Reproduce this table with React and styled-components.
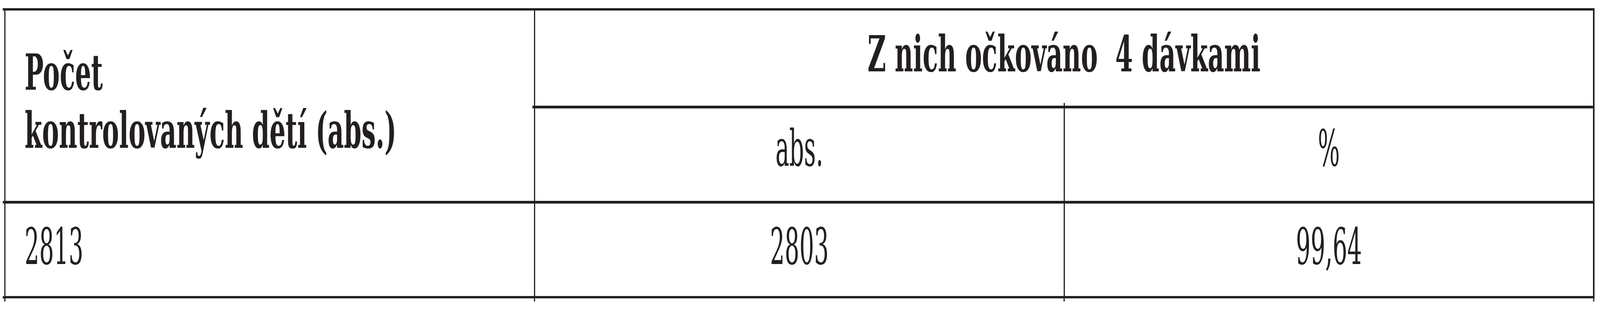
import React, { useEffect, useState } from "react";
import styled, { createGlobalStyle } from "styled-components";

/* The reference is drawn on a 7803px-wide page. Horizontal measures are
   expressed as a share of the viewport width so the table keeps its
   proportions on whatever window width the page gets. */
const REF_W = 7803;
const X = (px) => `${((px * 100) / REF_W).toFixed(5)}vw`;

const INK = "#231f20";
const RULE = 6.6; // rule thickness (reference px)
const TABLE_W = 7755.3;
const COL_W = (TABLE_W - 4 * RULE) / 3;

const Global = createGlobalStyle`
  html, body { margin: 0; padding: 0; background: #ffffff; overflow: hidden; }
`;

const Page = styled.div`
  box-sizing: border-box;
  width: 100vw;
  height: 800px;
  padding: 20.5px 0 0 ${X(20.7)};
  background: #ffffff;
`;

/* rules are the ink showing through the gaps of the grid */
const Table = styled.div`
  position: relative;
  box-sizing: border-box;
  width: ${X(TABLE_W)};
  display: grid;
  grid-template-columns: repeat(3, minmax(0, 1fr));
  grid-template-rows: 244px 237.3px 237.3px;
  gap: ${RULE}px ${X(RULE)};
  padding: ${RULE}px ${X(RULE)};
  background: ${INK};

  /* overhang of the horizontal rules past the left border */
  &::before {
    content: "";
    position: absolute;
    left: ${X(-7)};
    top: 0;
    width: ${X(7)};
    height: ${RULE}px;
    background: ${INK};
    box-shadow: 0 494.5px 0 ${INK}, 0 738.4px 0 ${INK};
  }

  /* overhang of the vertical rules below the bottom rule */
  &::after {
    content: "";
    position: absolute;
    left: 0;
    top: 100%;
    width: ${X(RULE)};
    height: 7.5px;
    background: ${INK};
    box-shadow: ${X(RULE + COL_W)} 0 0 ${INK}, ${X(2 * (RULE + COL_W))} 0 0 ${INK},
      ${X(3 * (RULE + COL_W))} 0 0 ${INK};
  }
`;

const Cell = styled.div`
  background: #ffffff;
  color: ${INK};
  box-sizing: border-box;
  min-width: 0;
  grid-column: ${(p) => p.$col};
  grid-row: ${(p) => p.$row};
  text-align: ${(p) => (p.$left ? "left" : "center")};
  padding-top: ${(p) => p.$top}px;
  padding-left: ${(p) => (p.$left ? X(p.$left) : 0)};
`;

/* the spanning group heading; its pseudo-elements draw the little stubs
   where the sub-heading rules start */
const GroupCell = styled(Cell)`
  position: relative;

  &::before {
    content: "";
    position: absolute;
    left: ${X(COL_W)};
    bottom: 0;
    width: ${X(RULE)};
    height: 7.1px;
    background: ${INK};
  }

  &::after {
    content: "";
    position: absolute;
    left: ${X(-RULE - 7.5)};
    top: 100%;
    width: ${X(7.5)};
    height: ${RULE}px;
    background: ${INK};
  }
`;

const Text = styled.span`
  display: inline-block;
  white-space: pre;
  font-family: "DejaVu Serif", "Liberation Serif", serif;
  font-weight: ${(p) => (p.$bold ? 700 : 400)};
  font-size: ${(p) => (p.$bold ? 128 : 130)}px;
  line-height: 149px;
  color: ${INK};
  transform-origin: ${(p) => (p.$origin === "left" ? "left top" : "center top")};
`;

/* width factors that bring DejaVu Serif to the set widths of the original face */
const BOLD_FIT = 0.961;
const REG_FIT = 0.865;

function useSquish() {
  const [k, setK] = useState(
    typeof window !== "undefined" ? window.innerWidth / REF_W : 1
  );
  useEffect(() => {
    const on = () => setK(window.innerWidth / REF_W);
    window.addEventListener("resize", on);
    return () => window.removeEventListener("resize", on);
  }, []);
  return k;
}

export default function App() {
  const k = useSquish();
  const t = (bold) => ({
    transform: `scaleX(${(k * (bold ? BOLD_FIT : REG_FIT)).toFixed(4)})`,
  });

  return (
    <>
      <Global />
      <Page>
        <Table>
          <Cell $row="1 / span 2" $col="1" $left={93} $top={83.7}>
            <Text $bold $origin="left" style={t(true)}>
              {"Počet\nkontrolovaných dětí (abs.)"}
            </Text>
          </Cell>
          <GroupCell $row="1" $col="2 / span 2" $top={36.8}>
            <Text $bold style={t(true)}>{"Z nich očkováno  4 dávkami"}</Text>
          </GroupCell>
          <Cell $row="2" $col="2" $top={28.8}>
            <Text style={t(false)}>abs.</Text>
          </Cell>
          <Cell $row="2" $col="3" $top={28.8}>
            <Text style={t(false)}>%</Text>
          </Cell>
          <Cell $row="3" $col="1" $left={92} $top={36.5}>
            <Text $origin="left" style={t(false)}>2813</Text>
          </Cell>
          <Cell $row="3" $col="2" $top={36.5}>
            <Text style={t(false)}>2803</Text>
          </Cell>
          <Cell $row="3" $col="3" $top={36.5}>
            <Text style={t(false)}>99,64</Text>
          </Cell>
        </Table>
      </Page>
    </>
  );
}
